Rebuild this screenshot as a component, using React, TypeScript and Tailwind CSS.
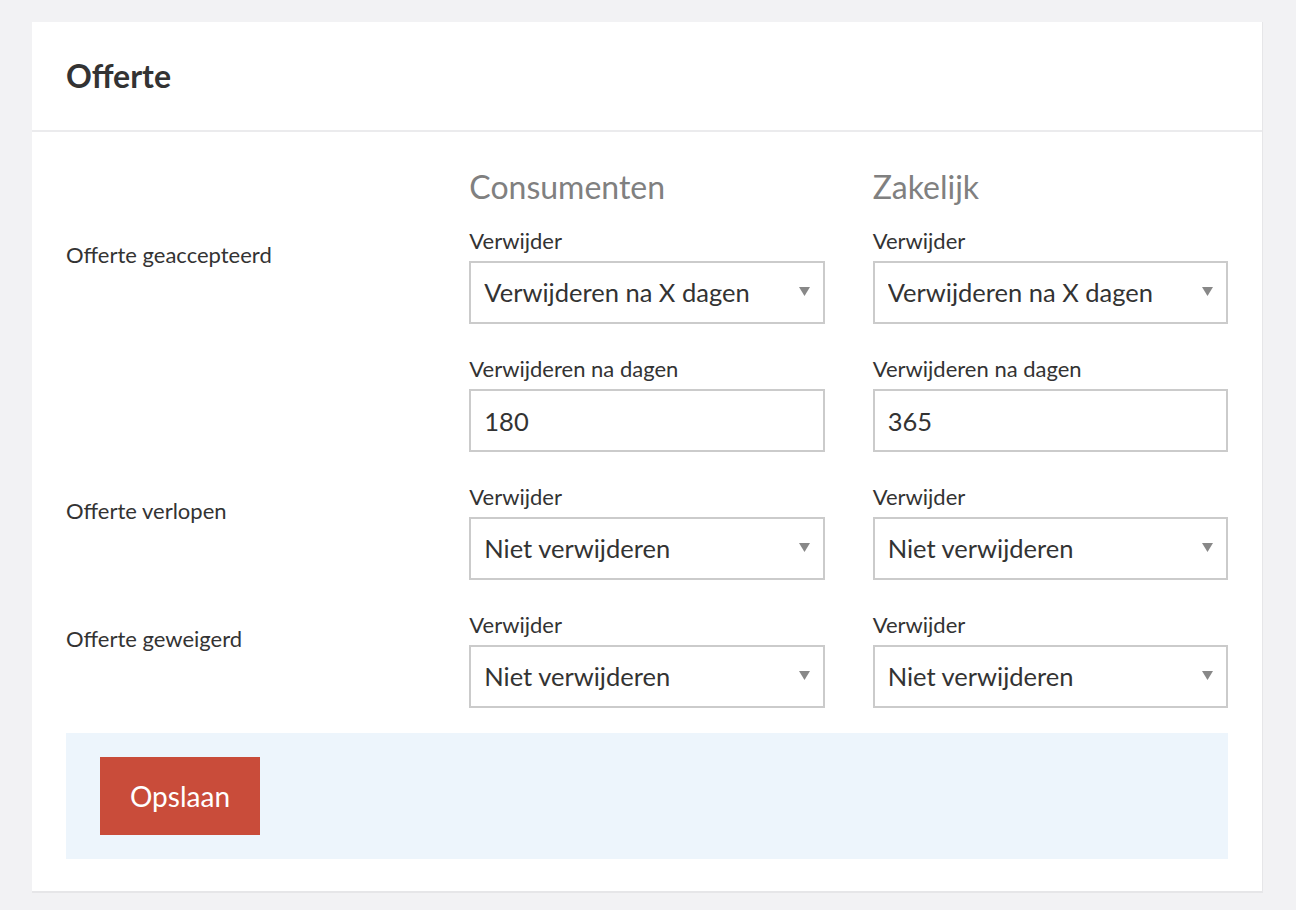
import React from "react";

const FONT = { fontFamily: "Lato, 'Noto Sans', sans-serif" };

interface FieldProps {
  label: string;
  value: string;
  select?: boolean;
}

function Field({ label, value, select }: FieldProps) {
  return (
    <div className="flex flex-col">
      <label className="mb-2 text-[22px] leading-6 text-[#333]">{label}</label>
      {select ? (
        <div className="relative">
          <select
            defaultValue={value}
            className="h-[63px] w-full appearance-none rounded-none border-2 border-[#cbcbcb] bg-white pl-[13px] pr-10 text-[25.5px] text-[#333] outline-none"
            style={FONT}
          >
            <option>{value}</option>
          </select>
          <svg
            className="pointer-events-none absolute right-[15px] top-[26px]"
            width="11"
            height="9"
            viewBox="0 0 11 9"
          >
            <polygon points="0,0 11,0 5.5,9" fill="#888" />
          </svg>
        </div>
      ) : (
        <input
          defaultValue={value}
          className="h-[63px] w-full rounded-none border-2 border-[#cbcbcb] bg-white px-[13px] text-[25.5px] text-[#333] outline-none"
          style={FONT}
        />
      )}
    </div>
  );
}

const ROWS = [
  {
    label: "Offerte geaccepteerd",
    consumer: [
      { label: "Verwijder", value: "Verwijderen na X dagen", select: true },
      { label: "Verwijderen na dagen", value: "180" },
    ],
    business: [
      { label: "Verwijder", value: "Verwijderen na X dagen", select: true },
      { label: "Verwijderen na dagen", value: "365" },
    ],
  },
  {
    label: "Offerte verlopen",
    consumer: [{ label: "Verwijder", value: "Niet verwijderen", select: true }],
    business: [{ label: "Verwijder", value: "Niet verwijderen", select: true }],
  },
  {
    label: "Offerte geweigerd",
    consumer: [{ label: "Verwijder", value: "Niet verwijderen", select: true }],
    business: [{ label: "Verwijder", value: "Niet verwijderen", select: true }],
  },
];

export default function App() {
  return (
    <div className="min-h-[910px] bg-[#f2f2f4] pl-8 pt-[22px]" style={FONT}>
      <div className="w-[1231px] border-r border-b-2 border-[#e6e6e8] bg-white">
        <div className="flex h-[110px] items-center border-b-2 border-[#ebebed] px-[34px]">
          <h1 className="text-[32px] font-bold text-[#333]">Offerte</h1>
        </div>

        <div className="px-[34px] pt-[37px] pb-8">
          <div className="grid grid-cols-3 gap-x-12 gap-y-[33px]">
            <div />
            <h2 className="-mb-[9px] text-[32px] leading-9 text-[#808080]">Consumenten</h2>
            <h2 className="-mb-[9px] text-[32px] leading-9 text-[#808080]">Zakelijk</h2>

            {ROWS.map((row) => (
              <React.Fragment key={row.label}>
                <div className="pt-[14px] text-[22px] leading-6 text-[#333]">{row.label}</div>
                <div className="flex flex-col gap-[33px]">
                  {row.consumer.map((f, i) => (
                    <Field key={i} {...f} />
                  ))}
                </div>
                <div className="flex flex-col gap-[33px]">
                  {row.business.map((f, i) => (
                    <Field key={i} {...f} />
                  ))}
                </div>
              </React.Fragment>
            ))}
          </div>

          <div className="mt-[25px] bg-[#edf5fc] px-[34px] py-6">
            <button
              type="button"
              className="h-[78px] w-[160px] bg-[#c94c3a] text-[28px] text-white"
              style={FONT}
            >
              Opslaan
            </button>
          </div>
        </div>
      </div>
    </div>
  );
}
